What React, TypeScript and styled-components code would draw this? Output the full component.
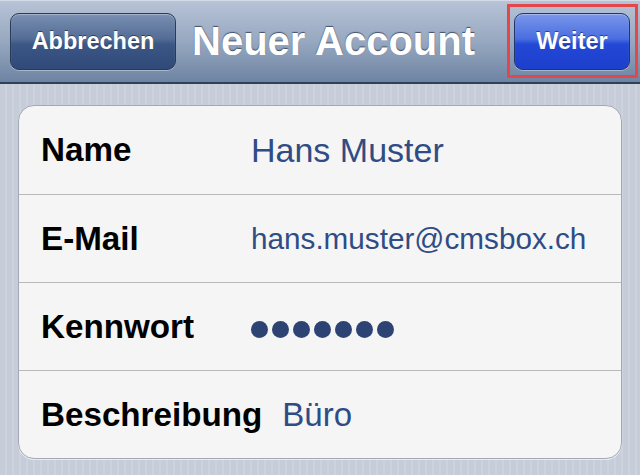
import React from 'react';
import styled, { createGlobalStyle } from 'styled-components';

const GlobalStyle = createGlobalStyle`
	html, body {
		margin: 0;
		padding: 0;
	}
	body {
		font-family: 'Liberation Sans', Arial, Helvetica, sans-serif;
	}
`;

const Screen = styled.div`
	width: 640px;
	height: 475px;
	overflow: hidden;
	background: repeating-linear-gradient(
		90deg,
		#c6ccd8 0px,
		#c6ccd8 5px,
		#ccd2de 5px,
		#ccd2de 7px
	);
`;

const NavBar = styled.div`
	display: flex;
	align-items: center;
	height: 82px;
	padding: 0 10px;
	background: linear-gradient(to bottom, #b8c4d7 0%, #97a8c0 50%, #6e84a3 100%);
	border-bottom: 2px solid #2f4059;
	box-shadow: inset 0 1px 0 rgba(255, 255, 255, 0.4);
`;

const BarButton = styled.button<{ $primary?: boolean }>`
	box-sizing: border-box;
	height: 57px;
	padding: 0;
	border-radius: 9px;
	border: 1px solid ${(p) => (p.$primary ? '#22346a' : '#2a3b57')};
	background: ${(p) =>
		p.$primary
			? 'linear-gradient(to bottom, #7a96ea 0%, #4a6ee0 45%, #2448d6 55%, #1c40cc 100%)'
			: 'linear-gradient(to bottom, #7a8fb2 0%, #536d96 45%, #3c5784 55%, #2f4a78 100%)'};
	box-shadow: inset 0 1px 1px rgba(255, 255, 255, 0.35), 0 1px 0 rgba(255, 255, 255, 0.35);
	color: #fff;
	font-family: 'Liberation Sans', Arial, sans-serif;
	font-weight: bold;
	font-size: 23.5px;
	text-shadow: 0 -1px 0 rgba(0, 0, 0, 0.45);
	cursor: pointer;
`;

const CancelButton = styled(BarButton)`
	width: 166px;
`;

const NextButton = styled(BarButton)`
	width: 116px;
`;

const Title = styled.h1`
	margin: 0 0 0 16px;
	color: #fff;
	font-family: 'Liberation Sans', Arial, sans-serif;
	font-weight: bold;
	font-size: 40px;
	line-height: 1;
	text-shadow: 0 -1px 1px rgba(40, 55, 80, 0.8);
`;

const Highlight = styled.div`
	position: relative;
	margin-left: auto;
	display: flex;

	&::after {
		content: '';
		position: absolute;
		top: -9px;
		left: -7px;
		right: -8px;
		bottom: -8px;
		border: 3px solid #e4474a;
		pointer-events: none;
	}
`;

const Card = styled.div`
	margin: 21px 18px 0;
	border: 1px solid #a3a8b2;
	border-radius: 16px;
	background: #f5f5f5;
	overflow: hidden;
	box-shadow: 0 1px 0 rgba(255, 255, 255, 0.6);
`;

const Row = styled.div`
	box-sizing: border-box;
	display: flex;
	align-items: center;
	height: 88px;
	padding-left: 22px;

	& + & {
		border-top: 1px solid #b9b9bb;
	}
`;

const Label = styled.span`
	min-width: 190px;
	margin-right: 20px;
	color: #000;
	font-weight: bold;
	font-size: 33.2px;
`;

const Value = styled.span<{ $size?: number }>`
	color: #2f4c84;
	font-size: ${(p) => p.$size ?? 34}px;
`;

const Dots = styled.div`
	display: flex;
	gap: 4px;
	margin-top: 6px;
`;

const Dot = styled.span`
	width: 17px;
	height: 17px;
	border-radius: 50%;
	background: #2c4374;
`;

const App = () => {
	return (
		<Screen>
			<GlobalStyle />
			<NavBar>
				<CancelButton>Abbrechen</CancelButton>
				<Title>Neuer Account</Title>
				<Highlight>
					<NextButton $primary>Weiter</NextButton>
				</Highlight>
			</NavBar>

			<Card>
				<Row>
					<Label>Name</Label>
					<Value>Hans Muster</Value>
				</Row>
				<Row>
					<Label>E-Mail</Label>
					<Value $size={29.7}>hans.muster@cmsbox.ch</Value>
				</Row>
				<Row>
					<Label>Kennwort</Label>
					<Dots aria-label="Kennwort">
						{Array.from({ length: 7 }).map((_, i) => (
							<Dot key={i} />
						))}
					</Dots>
				</Row>
				<Row>
					<Label>Beschreibung</Label>
					<Value $size={33}>Büro</Value>
				</Row>
			</Card>
		</Screen>
	);
};

export default App;
